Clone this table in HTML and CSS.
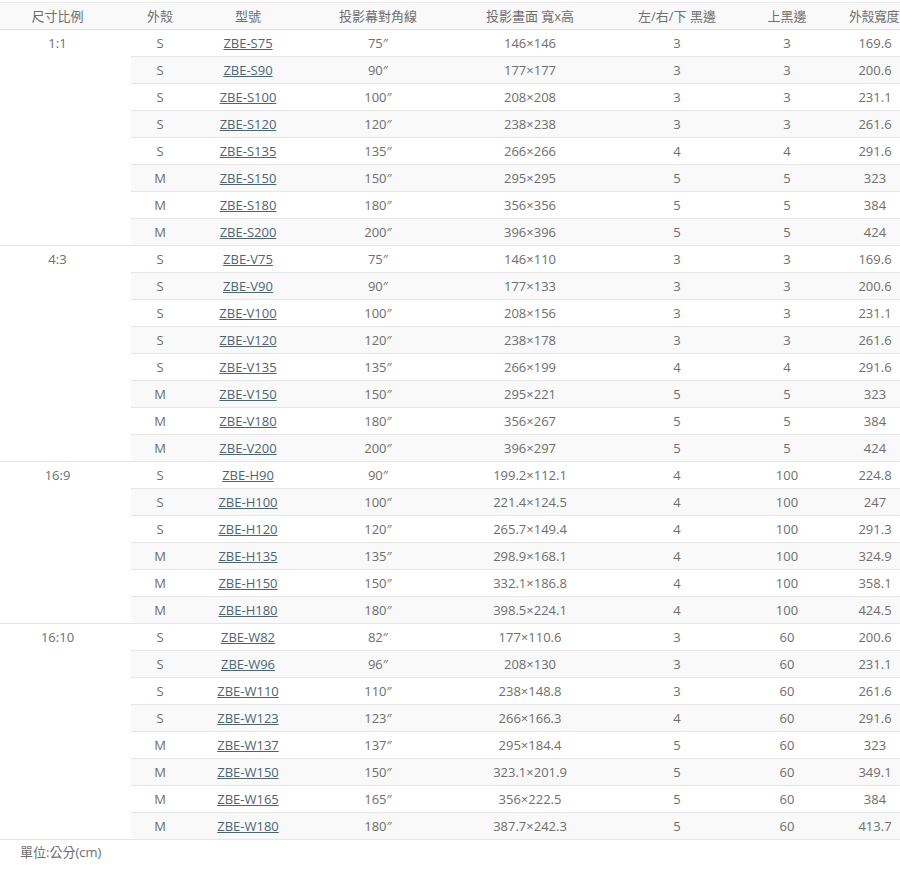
FILE: index.html
```html
<!DOCTYPE html>
<html lang="zh-Hant">
<head>
<meta charset="utf-8">
<title>規格表</title>
<link rel="stylesheet" href="styles.css">
</head>
<body>
<table class="spec">
<colgroup>
<col class="c1"><col class="c2"><col class="c3"><col class="c4"><col class="c5"><col class="c6"><col class="c7"><col class="c8">
</colgroup>
<thead>
<tr><th class="first">尺寸比例</th><th>外殼</th><th>型號</th><th>投影幕對角線</th><th>投影畫面 寬x高</th><th>左/右/下 黑邊</th><th>上黑邊</th><th class="last">外殼寬度</th></tr>
</thead>
<tbody>
<tr><td class="first" rowspan="8">1:1</td><td>S</td><td><a href="#">ZBE-S75</a></td><td>75″</td><td>146×146</td><td>3</td><td>3</td><td class="last">169.6</td></tr>
<tr class="alt"><td>S</td><td><a href="#">ZBE-S90</a></td><td>90″</td><td>177×177</td><td>3</td><td>3</td><td class="last">200.6</td></tr>
<tr><td>S</td><td><a href="#">ZBE-S100</a></td><td>100″</td><td>208×208</td><td>3</td><td>3</td><td class="last">231.1</td></tr>
<tr class="alt"><td>S</td><td><a href="#">ZBE-S120</a></td><td>120″</td><td>238×238</td><td>3</td><td>3</td><td class="last">261.6</td></tr>
<tr><td>S</td><td><a href="#">ZBE-S135</a></td><td>135″</td><td>266×266</td><td>4</td><td>4</td><td class="last">291.6</td></tr>
<tr class="alt"><td>M</td><td><a href="#">ZBE-S150</a></td><td>150″</td><td>295×295</td><td>5</td><td>5</td><td class="last">323</td></tr>
<tr><td>M</td><td><a href="#">ZBE-S180</a></td><td>180″</td><td>356×356</td><td>5</td><td>5</td><td class="last">384</td></tr>
<tr class="alt"><td>M</td><td><a href="#">ZBE-S200</a></td><td>200″</td><td>396×396</td><td>5</td><td>5</td><td class="last">424</td></tr>

<tr><td class="first" rowspan="8">4:3</td><td>S</td><td><a href="#">ZBE-V75</a></td><td>75″</td><td>146×110</td><td>3</td><td>3</td><td class="last">169.6</td></tr>
<tr class="alt"><td>S</td><td><a href="#">ZBE-V90</a></td><td>90″</td><td>177×133</td><td>3</td><td>3</td><td class="last">200.6</td></tr>
<tr><td>S</td><td><a href="#">ZBE-V100</a></td><td>100″</td><td>208×156</td><td>3</td><td>3</td><td class="last">231.1</td></tr>
<tr class="alt"><td>S</td><td><a href="#">ZBE-V120</a></td><td>120″</td><td>238×178</td><td>3</td><td>3</td><td class="last">261.6</td></tr>
<tr><td>S</td><td><a href="#">ZBE-V135</a></td><td>135″</td><td>266×199</td><td>4</td><td>4</td><td class="last">291.6</td></tr>
<tr class="alt"><td>M</td><td><a href="#">ZBE-V150</a></td><td>150″</td><td>295×221</td><td>5</td><td>5</td><td class="last">323</td></tr>
<tr><td>M</td><td><a href="#">ZBE-V180</a></td><td>180″</td><td>356×267</td><td>5</td><td>5</td><td class="last">384</td></tr>
<tr class="alt"><td>M</td><td><a href="#">ZBE-V200</a></td><td>200″</td><td>396×297</td><td>5</td><td>5</td><td class="last">424</td></tr>

<tr><td class="first" rowspan="6">16:9</td><td>S</td><td><a href="#">ZBE-H90</a></td><td>90″</td><td>199.2×112.1</td><td>4</td><td>100</td><td class="last">224.8</td></tr>
<tr class="alt"><td>S</td><td><a href="#">ZBE-H100</a></td><td>100″</td><td>221.4×124.5</td><td>4</td><td>100</td><td class="last">247</td></tr>
<tr><td>S</td><td><a href="#">ZBE-H120</a></td><td>120″</td><td>265.7×149.4</td><td>4</td><td>100</td><td class="last">291.3</td></tr>
<tr class="alt"><td>M</td><td><a href="#">ZBE-H135</a></td><td>135″</td><td>298.9×168.1</td><td>4</td><td>100</td><td class="last">324.9</td></tr>
<tr><td>M</td><td><a href="#">ZBE-H150</a></td><td>150″</td><td>332.1×186.8</td><td>4</td><td>100</td><td class="last">358.1</td></tr>
<tr class="alt"><td>M</td><td><a href="#">ZBE-H180</a></td><td>180″</td><td>398.5×224.1</td><td>4</td><td>100</td><td class="last">424.5</td></tr>

<tr><td class="first" rowspan="8">16:10</td><td>S</td><td><a href="#">ZBE-W82</a></td><td>82″</td><td>177×110.6</td><td>3</td><td>60</td><td class="last">200.6</td></tr>
<tr class="alt"><td>S</td><td><a href="#">ZBE-W96</a></td><td>96″</td><td>208×130</td><td>3</td><td>60</td><td class="last">231.1</td></tr>
<tr><td>S</td><td><a href="#">ZBE-W110</a></td><td>110″</td><td>238×148.8</td><td>3</td><td>60</td><td class="last">261.6</td></tr>
<tr class="alt"><td>S</td><td><a href="#">ZBE-W123</a></td><td>123″</td><td>266×166.3</td><td>4</td><td>60</td><td class="last">291.6</td></tr>
<tr><td>M</td><td><a href="#">ZBE-W137</a></td><td>137″</td><td>295×184.4</td><td>5</td><td>60</td><td class="last">323</td></tr>
<tr class="alt"><td>M</td><td><a href="#">ZBE-W150</a></td><td>150″</td><td>323.1×201.9</td><td>5</td><td>60</td><td class="last">349.1</td></tr>
<tr><td>M</td><td><a href="#">ZBE-W165</a></td><td>165″</td><td>356×222.5</td><td>5</td><td>60</td><td class="last">384</td></tr>
<tr class="alt"><td>M</td><td><a href="#">ZBE-W180</a></td><td>180″</td><td>387.7×242.3</td><td>5</td><td>60</td><td class="last">413.7</td></tr>
</tbody>
</table>
<p class="unit">單位:公分(cm)</p>
</body>
</html>
```
FILE: styles.css
```css
html, body {
  margin: 0;
  padding: 0;
  background: #ffffff;
}
body {
  font-family: "Open Sans", "Noto Sans CJK TC", sans-serif;
  font-size: 13px;
  color: #6e6e6e;
}
.spec {
  width: 900px;
  margin-top: 2px;
  border-collapse: collapse;
  table-layout: fixed;
}
.c1 { width: 131px; }
.c2 { width: 58px; }
.c3 { width: 118px; }
.c4 { width: 142px; }
.c5 { width: 162px; }
.c6 { width: 132px; }
.c7 { width: 88px; }
.c8 { width: 69px; }
.spec th,
.spec td {
  padding: 4px 0;
  height: 18px;
  line-height: 18px;
  text-align: center;
  vertical-align: top;
  font-weight: normal;
  white-space: nowrap;
  border-bottom: 1px solid #e6e6e6;
}
.spec thead th {
  background: #f9f9f9;
  border-top: 1px solid #ececec;
  border-bottom: 1px solid #dedede;
}
.spec .first {
  padding-right: 16px;
  background: #ffffff;
}
.spec thead .first { background: #f9f9f9; }
.spec .last {
  padding-left: 19px;
}
.spec thead .last {
  padding-left: 0;
  padding-right: 1px;
  text-align: right;
  letter-spacing: -0.5px;
}
.spec tr.alt td {
  background: #f9f9f9;
}
.spec a {
  color: #4b6575;
  text-decoration: underline;
}
.unit {
  margin: 3px 0 0;
  padding-left: 20px;
  line-height: 18px;
}
```
